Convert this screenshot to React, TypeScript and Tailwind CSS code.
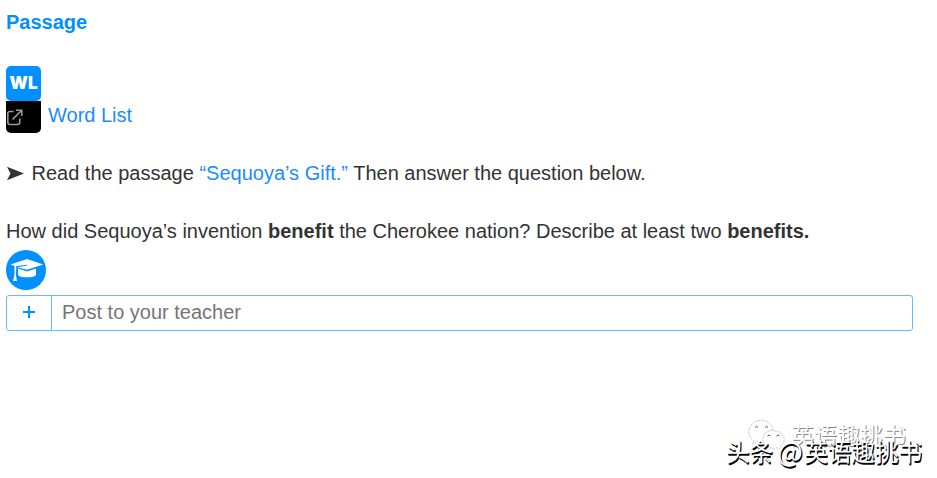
const wordListIcon = (
  <span className="flex h-[35px] w-[35px] items-center justify-center rounded-[5px] bg-[#0090ff] font-['Inter',sans-serif] text-[17px] leading-none font-black text-white">
    WL
  </span>
)

function ExternalIcon() {
  return (
    <span className="flex h-8 w-[35px] items-center rounded-b-[5px] bg-black">
      <svg width="18" height="17" viewBox="0 0 18 17" fill="none" stroke="#999" strokeWidth="1.600">
        <path d="M7.500 2.500H4Q1.800 2.500 1.800 4.500V13Q1.800 15.500 4 15.500H11.500Q13.800 15.500 13.800 13V9.500" />
        <path d="M6.500 10.500 15.500 1.500M10 1.200H15.800V7" />
      </svg>
    </span>
  )
}

function GraduationIcon() {
  return (
    <svg className="block" width="40" height="40" viewBox="0 0 40 40">
      <circle cx="20" cy="20" r="20" fill="#0090ff" />
      <g fill="white">
        <path d="M4.500 14.500 21 9 37.200 14.500 21 19.800 11.200 17.200 21.500 15.400 21 14.700 9 16.300Z" />
        <path d="M12 18.600 21 21.600 30 18.600V25Q28.500 27.300 21 27.300 13.500 27.300 12 25Z" />
        <path d="M8.500 16 10.300 16.500 9.900 25 10.900 31H7L8.400 25Z" />
      </g>
    </svg>
  )
}

function WeChatIcon() {
  return (
    <svg className="absolute top-[5px] left-[22px]" width="38" height="33" viewBox="0 0 38 33" fill="white">
      <g stroke="#aaa" strokeWidth="0.7" strokeDasharray="2 1">
        <path d="M6 21.500 4.500 25 9 22.800C21 26 27 18 25 10 22 0 8 -2 2.500 7-1 13 1 18.500 6 21.500Z" />
        <path d="M32.500 27 34 31 29 28.700C21 31 15 26 14.800 20.500 15 13 22 10.500 27 11.800 37 14 39 22 32.500 27Z" />
      </g>
      <g fill="none" stroke="#555" strokeWidth="1">
        <path d="M7 8.500Q8.500 6 10 8.500M17 8.500Q18.500 6 20 8.500M19.500 17Q21 15 22.500 17M28.500 17Q30 15 31.500 17" />
      </g>
    </svg>
  )
}

function Watermark() {
  return (
    <div className="absolute top-[414px] left-[726px] h-[60px] w-[205px] font-['Noto_Sans_CJK_SC',sans-serif] whitespace-nowrap text-white">
      <WeChatIcon />
      <span className="absolute top-[5px] left-[65px] text-[23px] leading-[30px] [text-shadow:1px_1px_0_#888]">
        英语趣挑书
      </span>
      <span className="absolute top-[21px] left-0 flex text-[23.600px] leading-[32px] [text-shadow:1px_1px_0_#000,1px_2px_0_#111]">
        <span>头条</span>
        <span className="ml-1 w-[27px] text-[27px]">@</span>
        <span>英语趣挑书</span>
      </span>
    </div>
  )
}

export default function App() {
  return (
    <div className="relative h-[478px] overflow-hidden bg-white pt-2 pl-1.5 font-['Liberation_Sans',Arial,sans-serif] text-[20px] leading-[29px] text-[#333]">
      <h1 className="font-bold text-[#0090ff]">Passage</h1>

      <div className="mt-[29px] flex">
        <div>
          {wordListIcon}
          <ExternalIcon />
        </div>
        <a href="#" className="mt-[35px] ml-[7px] text-[#1a8cff]">Word List</a>
      </div>

      <p className="mt-[26px]">
        <svg className="mr-[7.500px] inline-block align-[-1px]" width="18" height="15" viewBox="0 0 18 15" fill="#333">
          <path d="M1 0.800 18 7.500 1 14.200 4.500 7.500Z" />
        </svg>
        Read the passage <a href="#" className="text-[#1a8cff]">“Sequoya’s Gift.”</a> Then answer the question below.
      </p>

      <p className="mt-[29px]">
        How did Sequoya’s invention <b>benefit</b> the Cherokee nation? Describe at least two <b>benefits.</b>
      </p>

      <div className="mt-1">
        <GraduationIcon />
      </div>

      <div className="mt-[5px] flex h-9 w-[907px] rounded-[3px] border border-[#66baff]">
        <button className="flex w-[45px] items-center justify-center border-r border-[#66baff]" aria-label="Add">
          <svg className="-mt-0.5" width="12" height="12" viewBox="0 0 12 12" stroke="#0090ff" strokeWidth="2">
            <path d="M0 6H12M6 0V12" />
          </svg>
        </button>
        <input
          className="min-w-0 flex-1 bg-transparent px-2.5 pb-0.5 outline-none placeholder:text-[#757575]"
          placeholder="Post to your teacher"
        />
      </div>

      <Watermark />
    </div>
  )
}
